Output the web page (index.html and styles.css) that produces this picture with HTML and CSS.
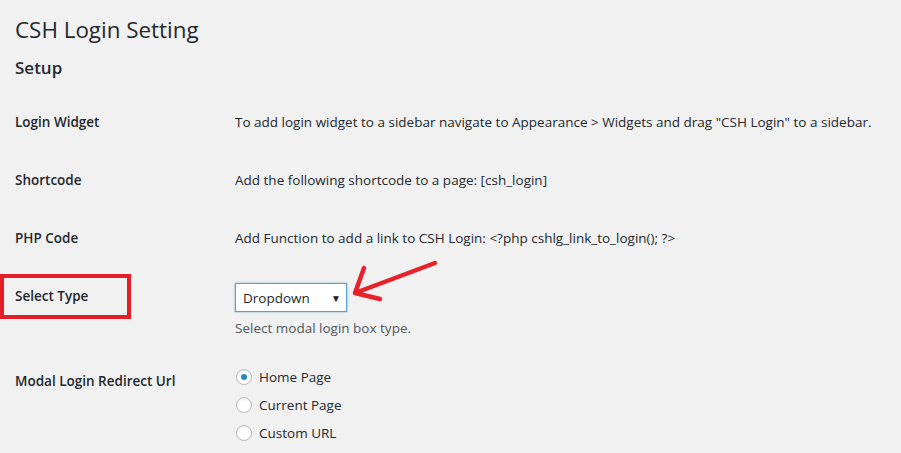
FILE: index.html
```html
<!DOCTYPE html>
<html>
<head>
<meta charset="utf-8">
<link rel="stylesheet" href="styles.css">
</head>
<body>
<div class="wrap">
  <h1 class="title">CSH Login Setting</h1>
  <h2 class="subtitle">Setup</h2>
  <div class="form-table">
    <div class="row">
      <div class="th">Login Widget</div>
      <div class="td">To add login widget to a sidebar navigate to Appearance &gt; Widgets and drag "CSH Login" to a sidebar.</div>
    </div>
    <div class="row">
      <div class="th">Shortcode</div>
      <div class="td">Add the following shortcode to a page: [csh_login]</div>
    </div>
    <div class="row">
      <div class="th">PHP Code</div>
      <div class="td">Add Function to add a link to CSH Login: &lt;?php cshlg_link_to_login(); ?&gt;</div>
    </div>
    <div class="row row-select">
      <div class="th">Select Type<span class="mark-box"></span></div>
      <div class="td td-select">
        <div class="select">
          <span class="select-value">Dropdown</span>
          <span class="select-caret">&#9660;</span>
        </div>
        <p class="description">Select modal login box type.</p>
        <svg class="mark-arrow" width="100" height="50" viewBox="0 0 100 50">
          <path d="M95 8 L15 38 M24 13 L15 38 L40 44" fill="none" stroke="#e8212b" stroke-width="4.5" stroke-linecap="round" stroke-linejoin="round"/>
        </svg>
      </div>
    </div>
    <div class="row row-radio">
      <div class="th">Modal Login Redirect Url</div>
      <div class="td td-radio">
        <label class="radio"><span class="dot checked"></span>Home Page</label>
        <label class="radio"><span class="dot"></span>Current Page</label>
        <label class="radio"><span class="dot"></span>Custom URL</label>
      </div>
    </div>
  </div>
</div>
</body>
</html>
```

FILE: styles.css
```css
html, body {
  margin: 0;
  padding: 0;
  background: #f1f1f1;
}
body {
  font-family: "Open Sans", "Noto Sans", sans-serif;
  font-size: 13.5px;
  color: #23282d;
  width: 901px;
  height: 453px;
  overflow: hidden;
}
.wrap {
  padding: 15px 0 0 15px;
}
.title {
  margin: 0;
  font-size: 22.4px;
  font-weight: 400;
  line-height: 30px;
  height: 30px;
}
.subtitle {
  margin: 11px 0 0 0;
  font-size: 17px;
  font-weight: 600;
  line-height: 24px;
  height: 24px;
}
.form-table {
  margin-top: 13px;
}
.row {
  display: grid;
  grid-template-columns: 220px 1fr;
  height: 58px;
}
.th {
  position: relative;
  font-weight: 600;
  padding-top: 19px;
  line-height: 20px;
}
.td {
  padding-top: 19px;
  line-height: 20px;
  white-space: nowrap;
}
.row-select {
  height: 85px;
}
.td-select {
  position: relative;
  padding-top: 16px;
}
.select {
  width: 110px;
  height: 27px;
  box-sizing: content-box;
  border: 1px solid #5b9dd9;
  box-shadow: 0 0 2px rgba(30, 140, 190, 0.6);
  background: #fff;
  display: flex;
  align-items: center;
  justify-content: space-between;
  padding: 0;
}
.select-value {
  padding-left: 7px;
}
.select-caret {
  font-size: 10px;
  padding-right: 5px;
  color: #222;
}
.description {
  margin: 6px 0 0 0;
  line-height: 20px;
  color: #50575e;
}
.mark-box {
  position: absolute;
  left: -15px;
  top: 7px;
  width: 123px;
  height: 37px;
  border: 4px solid #e31e27;
}
.mark-arrow {
  position: absolute;
  left: 105px;
  top: -12px;
}
.td-radio {
  padding-top: 11px;
  display: flex;
  flex-direction: column;
}
.radio {
  display: flex;
  align-items: center;
  height: 28px;
  line-height: 28px;
}
.dot {
  width: 14px;
  height: 14px;
  border: 1px solid #b4b9be;
  border-radius: 50%;
  background: #fff;
  box-shadow: inset 0 1px 2px rgba(0,0,0,0.1);
  margin-right: 7px;
  margin-left: 1px;
  display: flex;
  align-items: center;
  justify-content: center;
}
.dot.checked::after {
  content: "";
  width: 6px;
  height: 6px;
  border-radius: 50%;
  background: #1e8cbe;
}
```
